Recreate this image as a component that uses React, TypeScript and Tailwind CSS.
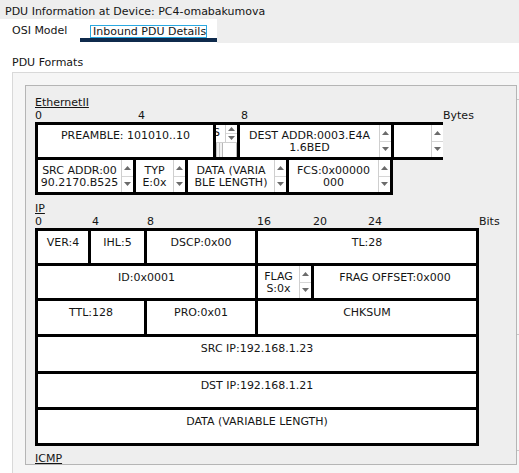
import React from "react";

const Up = () => (
  <svg width="7" height="4" viewBox="0 0 7 4">
    <path d="M0 4 L3.5 0 L7 4 Z" fill="#6b6b6b" />
  </svg>
);
const Down = () => (
  <svg width="7" height="4" viewBox="0 0 7 4">
    <path d="M0 0 L3.5 4 L7 0 Z" fill="#6b6b6b" />
  </svg>
);

function Spin() {
  return (
    <div className="w-[12px] shrink-0 flex flex-col border-l border-[#cfcfcf] bg-white">
      <div className="flex-1 flex items-center justify-center border-b border-[#d6d6d6]">
        <Up />
      </div>
      <div className="flex-1 flex items-center justify-center">
        <Down />
      </div>
    </div>
  );
}

function ECell({ className, lines, spin = true }: { className: string; lines: string[]; spin?: boolean }) {
  return (
    <div className={"bg-white flex h-[32px] shrink-0 " + className}>
      <div className="flex-1 min-w-0 overflow-hidden whitespace-nowrap text-center pt-[5px] leading-[12px]">
        {lines.map((l, i) => (
          <div key={i}>{l}</div>
        ))}
      </div>
      {spin && <Spin />}
    </div>
  );
}

function ICell({ className, children }: { className: string; children: React.ReactNode }) {
  return (
    <div className={"bg-white shrink-0 text-center pt-[6px] leading-[12px] whitespace-nowrap " + className}>
      {children}
    </div>
  );
}

export default function App() {
  return (
    <div className="w-[519px] h-[473px] overflow-hidden bg-white font-['DejaVu_Sans',sans-serif] text-[11px] text-[#151515]">
      {/* title bar */}
      <div className="h-[19px] bg-[#eeeeee] pl-[5px] pt-[5px] leading-[13px] whitespace-nowrap">
        PDU Information at Device: PC4-omabakumova
      </div>
      {/* tabs */}
      <div className="flex h-[24px]">
        <div className="w-[217px] bg-white flex">
          <div className="pl-[12px] pt-[5px] leading-[13px] w-[80px]">OSI Model</div>
          <div className="w-[137px] flex flex-col">
            <div className="pt-[6px] pl-[10px]">
              <div className="h-[13px] w-[117px] border border-[#2aa8e0] px-[2px] leading-[11px] whitespace-nowrap">
                Inbound PDU Details
              </div>
            </div>
            <div className="mt-auto h-[4px] mb-[1px] bg-[#0f2a4c]" />
          </div>
        </div>
        <div className="flex-1 bg-[#eeeeee]" />
      </div>
      {/* body */}
      <div className="pl-[12px] bg-white">
        <div className="pt-[13px] leading-[13px]">PDU Formats</div>
        <div className="mt-[3px] border-l border-t border-[#d9d9d9] bg-[#f6f6f6] pl-[12px] pt-[12px] h-[402px] flex items-start">
          <div className="w-[492px] h-[380px] shrink-0 border border-[#b5b5b5] bg-[#eeeeee] pl-[9px] pt-[10px] flex flex-col">
            {/* Ethernet */}
            <div className="leading-[13px] underline">EthernetII</div>
            <div className="flex leading-[13px] h-[13px]">
              <div className="w-[103px]">0</div>
              <div className="w-[103px]">4</div>
              <div className="w-[202px]">8</div>
              <div>Bytes</div>
            </div>
            <div className="flex bg-black pl-[3px] pt-[3px] pb-[3px] gap-[3px] w-[408px]">
              <ECell className="w-[175px]" lines={["PREAMBLE: 101010..10"]} spin={false} />
              <div className="w-[21px] h-[32px] bg-white flex flex-col shrink-0">
                <div className="h-[17px] flex">
                  <div className="w-[9px] overflow-hidden pt-[2px] leading-[12px]">
                    <span className="-ml-[3px] inline-block">S</span>
                  </div>
                  <Spin />
                </div>
                <div className="flex-1 flex border-t border-[#cfcfcf] bg-[#f2f2f2]">
                  <div className="w-[3px] border-l border-[#c4c4c4]" />
                  <div className="w-[3px] border-l border-[#c4c4c4]" />
                  <div className="w-[15px] border-l border-r border-[#b8b8b8] bg-white" />
                </div>
              </div>
              <ECell className="w-[151px]" lines={["DEST ADDR:0003.E4A", "1.6BED"]} />
              <ECell className="w-[49px]" lines={[""]} />
            </div>
            <div className="flex bg-black pl-[3px] pr-[3px] pb-[3px] gap-[3px] w-[358px]">
              <ECell className="w-[95px]" lines={["SRC ADDR:00", "90.2170.B525"]} />
              <ECell className="w-[49px]" lines={["TYP", "E:0x"]} />
              <ECell className="w-[98px]" lines={["DATA (VARIA", "BLE LENGTH)"]} />
              <ECell className="w-[101px]" lines={["FCS:0x00000", "000"]} />
            </div>
            {/* IP */}
            <div className="mt-[7px] leading-[13px] underline">IP</div>
            <div className="flex leading-[13px] h-[13px]">
              <div className="w-[57px]">0</div>
              <div className="w-[55px]">4</div>
              <div className="w-[110px]">8</div>
              <div className="w-[56px]">16</div>
              <div className="w-[55px]">20</div>
              <div className="w-[111px]">24</div>
              <div>Bits</div>
            </div>
            <div className="w-[444px] bg-black p-[3px] flex flex-col gap-[3px]">
              <div className="flex gap-[3px] h-[32px]">
                <ICell className="w-[50px]">VER:4</ICell>
                <ICell className="w-[53px]">IHL:5</ICell>
                <ICell className="w-[108px]">DSCP:0x00</ICell>
                <ICell className="w-[218px]">TL:28</ICell>
              </div>
              <div className="flex gap-[3px] h-[32px]">
                <ICell className="w-[217px]">ID:0x0001</ICell>
                <div className="w-[53px] bg-white flex shrink-0">
                  <div className="flex-1 text-center pt-[5px] leading-[12px]">
                    <div>FLAG</div>
                    <div>S:0x</div>
                  </div>
                  <Spin />
                </div>
                <ICell className="w-[162px]">FRAG OFFSET:0x000</ICell>
              </div>
              <div className="flex gap-[3px] h-[33px]">
                <ICell className="w-[106px]">TTL:128</ICell>
                <ICell className="w-[108px]">PRO:0x01</ICell>
                <ICell className="w-[218px]">CHKSUM</ICell>
              </div>
              <div className="flex h-[34px]">
                <ICell className="w-[438px]">SRC IP:192.168.1.23</ICell>
              </div>
              <div className="flex h-[33px]">
                <ICell className="w-[438px]">DST IP:192.168.1.21</ICell>
              </div>
              <div className="flex h-[33px]">
                <ICell className="w-[438px]">DATA (VARIABLE LENGTH)</ICell>
              </div>
            </div>
            <div className="mt-[6px] leading-[13px] underline">ICMP</div>
          </div>
          <div className="w-[3px] flex flex-col">
            <div className="h-px bg-[#c8c8c8] mt-[14px]" />
            <div className="h-px bg-[#c8c8c8] mt-[234px]" />
            <div className="h-px bg-[#c8c8c8] mt-[115px]" />
          </div>
        </div>
      </div>
    </div>
  );
}
